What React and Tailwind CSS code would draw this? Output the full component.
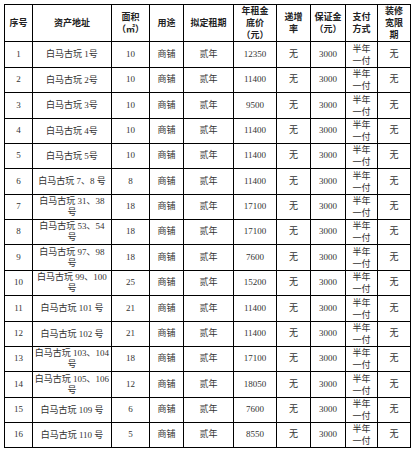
import React from "react";

const rows = [
  ["1", ["白马古玩 1号"], "10", "12350", "h-[26px]"],
  ["2", ["白马古玩 2号"], "10", "11400", "h-[25px]"],
  ["3", ["白马古玩 3号"], "10", "9500", "h-[26px]"],
  ["4", ["白马古玩 4号"], "10", "11400", "h-[25px]"],
  ["5", ["白马古玩 5号"], "10", "11400", "h-[25px]"],
  ["6", ["白马古玩 7、8 号"], "8", "11400", "h-[26px]"],
  ["7", ["白马古玩 31、38", "号"], "18", "17100", "h-[25px]"],
  ["8", ["白马古玩 53、54", "号"], "18", "17100", "h-[25px]"],
  ["9", ["白马古玩 97、98", "号"], "18", "7600", "h-[26px]"],
  ["10", ["白马古玩 99、100", "号"], "25", "15200", "h-[25px]"],
  ["11", ["白马古玩 101 号"], "21", "11400", "h-[26px]"],
  ["12", ["白马古玩 102 号"], "21", "11400", "h-[25px]"],
  ["13", ["白马古玩 103、104", "号"], "18", "17100", "h-[25px]"],
  ["14", ["白马古玩 105、106", "号"], "12", "18050", "h-[26px]"],
  ["15", ["白马古玩 109 号"], "6", "7600", "h-[25px]"],
  ["16", ["白马古玩 110 号"], "5", "8550", "h-[25px]"],
];

const headers = [
  ["序号"],
  ["资产地址"],
  ["面积", "（㎡）"],
  ["用途"],
  ["拟定租期"],
  ["年租金", "底价", "（元）"],
  ["递增", "率"],
  ["保证金", "（元）"],
  ["支付", "方式"],
  ["装修", "宽限", "期"],
];

function Lines({ lines }) {
  return lines.map((l, i) => (
    <React.Fragment key={i}>
      {i > 0 && <br />}
      {l}
    </React.Fragment>
  ));
}

export default function App() {
  const td = "border border-black text-center align-middle p-0";
  return (
    <div className="bg-white p-1 font-['Liberation_Serif','Noto_Sans_CJK_SC',serif] text-[9px] text-[#333]">
      <table className="w-[406px] table-fixed border-collapse">
        <colgroup>
          <col className="w-[28px]" />
          <col className="w-[79px]" />
          <col className="w-[38px]" />
          <col className="w-[34px]" />
          <col className="w-[50px]" />
          <col className="w-[43px]" />
          <col className="w-[34px]" />
          <col className="w-[35px]" />
          <col className="w-[32px]" />
          <col className="w-[33px]" />
        </colgroup>
        <thead>
          <tr className="h-[37px]">
            {headers.map((h, i) => (
              <th key={i} className={`${td} font-bold leading-[12px] text-[#222]`}>
                <Lines lines={h} />
              </th>
            ))}
          </tr>
        </thead>
        <tbody>
          {rows.map(([no, addr, area, rent, h]) => (
            <tr key={no} className={h}>
              <td className={td}>{no}</td>
              <td className={`${td} leading-[11px]`}>
                <Lines lines={addr} />
              </td>
              <td className={td}>{area}</td>
              <td className={td}>商铺</td>
              <td className={td}>贰年</td>
              <td className={td}>{rent}</td>
              <td className={td}>无</td>
              <td className={td}>3000</td>
              <td className={`${td} leading-[12px]`}>
                半年
                <br />
                一付
              </td>
              <td className={td}>无</td>
            </tr>
          ))}
        </tbody>
      </table>
    </div>
  );
}
